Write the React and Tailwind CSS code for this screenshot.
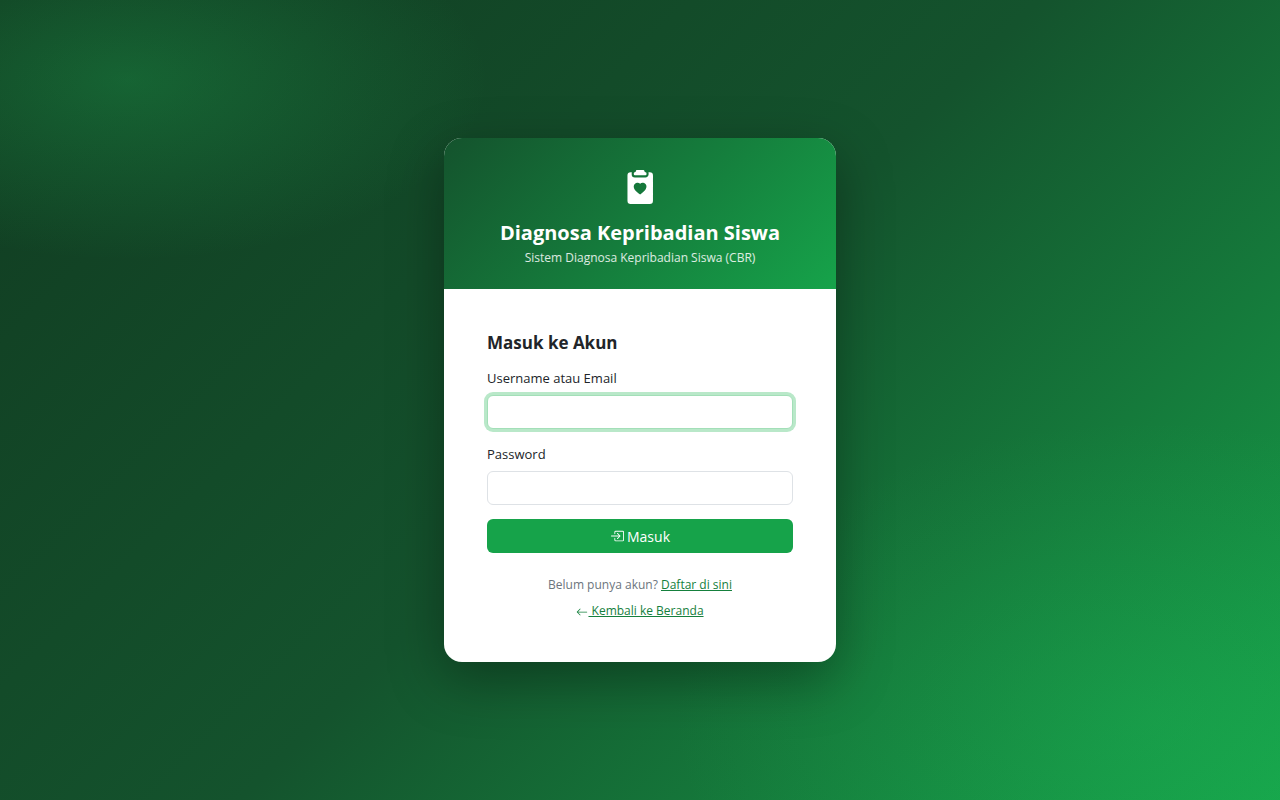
import { BsArrowLeft, BsBoxArrowInRight, BsClipboard2HeartFill } from 'react-icons/bs';

function Field({ id, label, type = 'text', autoFocus }) {
  return (
    <div className="mb-3.5">
      <label htmlFor={id} className="block mb-1.5 text-[13px] leading-[22px] text-[#212529]">{label}</label>
      <input
        id={id}
        name={id}
        type={type}
        autoFocus={autoFocus}
        className="block w-full h-[34px] px-3 rounded-md border border-[#dee2e6] bg-white text-[14px] text-[#212529] caret-transparent outline-none focus:border-[#a3dfb8] focus:ring-[3px] focus:ring-[#b9e8c9]"
      />
    </div>
  );
}

function CardHeader() {
  return (
    <div className="flex flex-col items-center px-7 pt-8 pb-[21px] text-center text-white bg-[linear-gradient(135deg,#14532d,#16a34a)]">
      <BsClipboard2HeartFill size={34} />
      <h1 className="mt-4 text-[20px] leading-[26px] font-bold">Diagnosa Kepribadian Siswa</h1>
      <p className="mt-0.5 text-[12px] leading-5 text-white/85">Sistem Diagnosa Kepribadian Siswa (CBR)</p>
    </div>
  );
}

export default function App() {
  return (
    <main className="min-h-screen flex items-center justify-center p-4 font-['Open_Sans','Noto_Sans',sans-serif] bg-[radial-gradient(360px_180px_at_10%_10%,rgba(34,197,94,0.27),rgba(34,197,94,0)),radial-gradient(480px_300px_at_90%_90%,rgba(34,197,94,0.2),rgba(34,197,94,0)),linear-gradient(135deg,#113b21_0%,#14532d_50%,#16a34a_100%)]">
      <div className="w-full max-w-[392px] overflow-hidden rounded-[18px] bg-white shadow-[0_18px_54px_rgba(0,0,0,0.35)]">
        <CardHeader />

        <div className="px-[43px] pt-[43px] pb-[41px]">
          <h2 className="mb-[13px] text-[17px] leading-[22px] font-bold text-[#212529]">Masuk ke Akun</h2>

          <form onSubmit={e => e.preventDefault()}>
            <Field id="username" label="Username atau Email" autoFocus />
            <Field id="password" label="Password" type="password" />
            <button
              type="submit"
              className="flex w-full h-[34px] items-center justify-center gap-[3px] rounded-md bg-[#16a34a] text-[14px] text-white"
            >
              <BsBoxArrowInRight size={14} />
              Masuk
            </button>
          </form>

          <div className="mt-[22px] text-center text-[12px] leading-5 text-[#6c757d]">
            <p>
              Belum punya akun? <a href="#daftar" className="text-[#15803d] underline">Daftar di sini</a>
            </p>
            <p className="mt-1.5">
              <a href="#beranda" className="text-[#15803d] underline">
                <BsArrowLeft size={12} className="inline-block" /> Kembali ke Beranda
              </a>
            </p>
          </div>
        </div>
      </div>
    </main>
  );
}
